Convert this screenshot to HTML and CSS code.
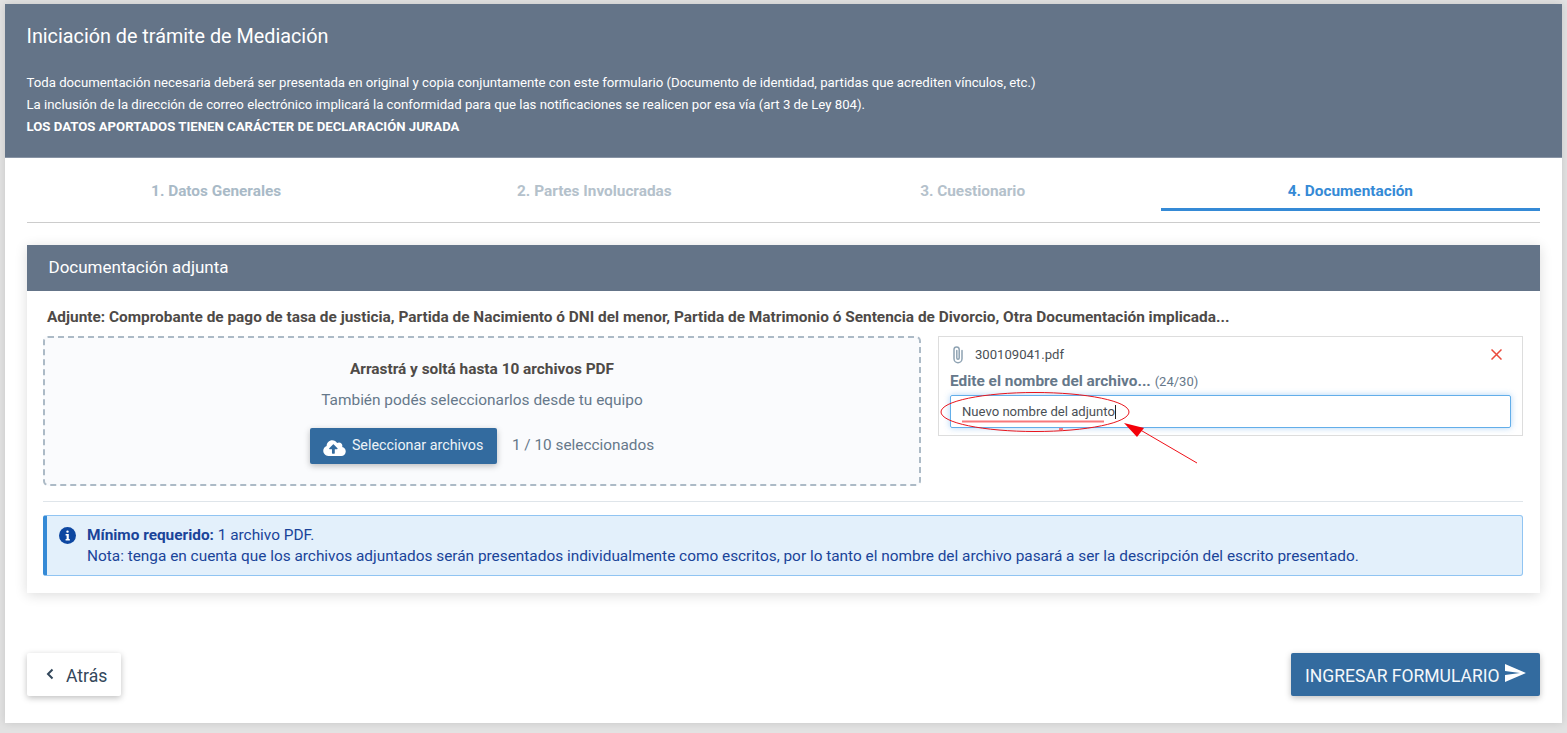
FILE: index.html

```html
<!doctype html>
<html>
<head>
	<meta http-equiv="Content-Type" content="text/html; charset=UTF-8">
	<title>Iniciación de trámite de Mediación</title>
	<link rel="stylesheet" href="styles.css">
</head>
<body>
	<div class="page">
		<header class="top">
			<h1>Iniciación de trámite de Mediación</h1>
			<p>Toda documentación necesaria deberá ser presentada en original y copia conjuntamente con este formulario (Documento de identidad, partidas que acrediten vínculos, etc.)</p>
			<p>La inclusión de la dirección de correo electrónico implicará la conformidad para que las notificaciones se realicen por esa vía (art 3 de Ley 804).</p>
			<p><b>LOS DATOS APORTADOS TIENEN CARÁCTER DE DECLARACIÓN JURADA</b></p>
		</header>
		<div class="content">
			<nav class="tabs">
				<a>1. Datos Generales</a>
				<a>2. Partes Involucradas</a>
				<a>3. Cuestionario</a>
				<a class="active">4. Documentación</a>
			</nav>
			<section class="panel">
				<h2 class="panel__title">Documentación adjunta</h2>
				<div class="panel__body">
					<p class="panel__lead">Adjunte: Comprobante de pago de tasa de justicia, Partida de Nacimiento ó DNI del menor, Partida de Matrimonio ó Sentencia de Divorcio, Otra Documentación implicada...</p>
					<div class="upload">
						<div class="drop">
							<strong>Arrastrá y soltá hasta 10 archivos PDF</strong>
							<span class="drop__hint">También podés seleccionarlos desde tu equipo</span>
							<div class="drop__row">
								<button class="btn btn--small">
									<svg width="23" height="18" viewBox="0 0 640 512"><path fill="#fff" d="M537.6 226.6c4.1-10.7 6.4-22.4 6.4-34.6 0-53-43-96-96-96-19.7 0-38.1 6-53.3 16.2C367 64.2 315.3 32 256 32c-88.4 0-160 71.6-160 160 0 2.7.1 5.4.2 8.1C40.2 219.8 0 273.2 0 336c0 79.5 64.5 144 144 144h368c70.7 0 128-57.3 128-128 0-61.9-44-113.6-102.4-125.4zM393.4 288H328v112c0 8.8-7.2 16-16 16h-48c-8.8 0-16-7.2-16-16V288h-65.4c-14.3 0-21.4-17.2-11.3-27.3l105.4-105.4c6.2-6.2 16.4-6.2 22.6 0l105.4 105.4c10.1 10.1 2.9 27.3-11.3 27.3z"/></svg>
									<span>Seleccionar archivos</span>
								</button>
								<span class="drop__count">1 / 10 seleccionados</span>
							</div>
						</div>
						<div class="file">
							<div class="file__head">
								<svg class="file__clip" width="12" height="18" viewBox="0 0 12 18"><path fill="none" stroke="#8fa3b3" stroke-width="1.5" stroke-linecap="round" d="M10 4.5v8.2a4 4 0 0 1-8 0V3.6a2.6 2.6 0 0 1 5.2 0v8.4a1.2 1.2 0 0 1-2.4 0V4.5"/></svg>
								<span class="file__name">300109041.pdf</span>
								<svg class="file__del" width="11" height="11" viewBox="0 0 11 11"><path stroke="#ea4a3c" stroke-width="1.5" d="M.5.5l10 10M10.5.5l-10 10"/></svg>
							</div>
							<div class="file__label"><b>Edite el nombre del archivo...</b> <span>(24/30)</span></div>
							<div class="file__input">Nuevo nombre del adjunto<i></i></div>
						</div>
					</div>
					<div class="alert">
						<svg class="alert__icon" width="17" height="17" viewBox="0 0 17 17"><circle cx="8.5" cy="8.5" r="8.5" fill="#0d47a1"/><rect x="7.3" y="3.4" width="2.4" height="2.4" rx="1.1" fill="#fff"/><path fill="#fff" d="M6.6 7h3.2v5h1v1.4H6.6V12h1V8.4h-1z"/></svg>
						<div>
							<div><b>Mínimo requerido:</b> 1 archivo PDF.</div>
							<div>Nota: tenga en cuenta que los archivos adjuntados serán presentados individualmente como escritos, por lo tanto el nombre del archivo pasará a ser la descripción del escrito presentado.</div>
						</div>
					</div>
				</div>
			</section>
			<div class="actions">
				<button class="btn btn--back">
					<svg width="8" height="12" viewBox="0 0 8 12"><path fill="none" stroke="#33475b" stroke-width="2" d="M6.5 1.5L2 6l4.5 4.5"/></svg>
					<span>Atrás</span>
				</button>
				<button class="btn btn--send">
					<span>INGRESAR FORMULARIO</span>
					<svg width="21" height="18" viewBox="0 0 21 18"><path fill="#fff" d="M0 0l21 9-21 9v-7l15-2-15-2z"/></svg>
				</button>
			</div>
		</div>
		<!-- marcas hechas sobre la captura -->
		<svg class="marks" width="1567" height="733" viewBox="0 0 1567 733">
			<ellipse cx="1035" cy="412" rx="94" ry="19.5" fill="none" stroke="#e8141c" stroke-width="1"/>
			<path d="M962 421.5h142" stroke="#f8787c" stroke-width="2"/>
			<path d="M1059 429h4" stroke="#f8787c" stroke-width="2"/>
			<path d="M1197 463L1137 428" stroke="#f01018" stroke-width="1"/>
			<path fill="#f40008" d="M1124 423l20 5-7 9z"/>
		</svg>
	</div>
</body>
</html>
```

FILE: styles.css

```css
*,*:before,*:after{box-sizing:border-box;margin:0;padding:0}
body{background:#e2e2e2;color:#4a4a4a;font-family:Roboto,sans-serif;font-size:14px;height:733px;overflow:hidden}
svg{display:block;flex:none}
button{font-family:inherit;border:0;cursor:pointer;white-space:nowrap}

.page{position:relative;width:1557px;height:719px;margin:4px 5px 0;background:#fff;box-shadow:0 0 8px rgba(0,0,0,.12)}

.top{background:#647488;color:#fff;height:154px;padding:20px 22px 0 21.5px;border-bottom:1px solid #8894a5;font-size:13.2px}
.top h1{font-size:19.8px;font-weight:400;line-height:26px;margin-bottom:22px}
.top p{line-height:22px}
.top b{font-weight:700}

.content{padding:0 22px}

.tabs{display:grid;grid-template-columns:repeat(4,1fr);height:65px;border-bottom:1px solid #ccc}
.tabs a{height:53px;line-height:66px;text-align:center;font-size:15.35px;font-weight:700;color:#a9bac7}
.tabs a:nth-child(2),.tabs a:nth-child(3){color:#b4c1cb}
.tabs a.active{color:#358ad6;border-bottom:3px solid #358ad6;margin-left:-1px}

.panel{margin-top:22px;height:348px;box-shadow:0 2px 12px rgba(0,0,0,.14)}
.panel__title{background:#647488;color:#fff;font-size:17px;font-weight:400;height:46px;line-height:45px;padding-left:21.5px}
.panel__body{padding:16px 17px 16px 16px}
.panel__lead{font-size:15.4px;font-weight:700;color:#4e4a47;line-height:18px;padding:1px 0 0 4px;margin-bottom:10px}

.upload{display:flex;gap:17px;height:166px;border-bottom:1px solid #dfe5ea}

.drop{width:878px;height:150px;display:flex;flex-direction:column;align-items:center;padding-top:22px;background:#fafbfd;border:2px dashed #acbac6;border-radius:5px}
.drop strong{font-size:15.4px;font-weight:700;color:#4e4a47;line-height:18px}
.drop__hint{font-size:15.4px;color:#66788a;line-height:18px;margin-top:13px}
.drop__row{display:flex;align-items:center;gap:15px;margin-top:19px}
.drop__count{font-size:15.35px;color:#66788a;margin-top:-2px}

.btn{display:flex;align-items:center;border-radius:2px;box-shadow:0 2px 6px rgba(0,0,0,.25)}
.btn--small{height:36px;width:187px;padding:0 0 0 13px;gap:6px;background:#336b9f;color:#edf3f8;font-size:14.3px}
.btn--small svg{margin-top:4px}
.btn--small span{margin-top:-2px}

.file{width:585px;height:100px;border:1px solid #ddd;padding:0 11px}
.file__head{display:flex;align-items:center;height:34px;padding-top:1px}
.file__clip{margin-left:2px}
.file__name{margin-left:11px;font-size:13.1px;color:#4a4f55}
.file__del{margin-left:auto;margin-right:9px}
.file__label{font-size:15.4px;line-height:18px;color:#66788a;margin-top:1px}
.file__label b{font-weight:700}
.file__label span{font-size:13px}
.file__input{height:33px;margin-top:4px;padding-left:11px;font-size:13.1px;line-height:32px;color:#4a4f55;border:1px solid #63aee9;border-radius:2px;box-shadow:0 0 6px rgba(80,160,235,.45)}
.file__input i{display:inline-block;width:1px;height:14px;background:#222;vertical-align:-3px}

.alert{display:flex;gap:11px;height:61px;margin-top:13px;padding:9px 12px 0;background:#e3f0fb;color:#1a4499;font-size:15.38px;line-height:21px;border:1px solid #90c4f2;border-left:4px solid #358ad6;border-radius:3px}
.alert b{font-weight:700}
.alert__icon{margin-top:2px}

.actions{display:flex;justify-content:space-between;margin-top:60px}
.btn--back{height:43px;width:94px;padding:3px 0 0 19px;gap:12px;background:#fff;color:#33475b;font-size:17.6px}
.btn--back svg{margin-top:-4px}
.btn--send{height:43px;width:249px;padding:3px 0 0 14px;gap:5px;background:#336b9f;color:#f4f8fb;font-size:17.5px}
.btn--send svg{margin-top:-7px}

.marks{position:absolute;left:-5px;top:-4px;pointer-events:none}
```
